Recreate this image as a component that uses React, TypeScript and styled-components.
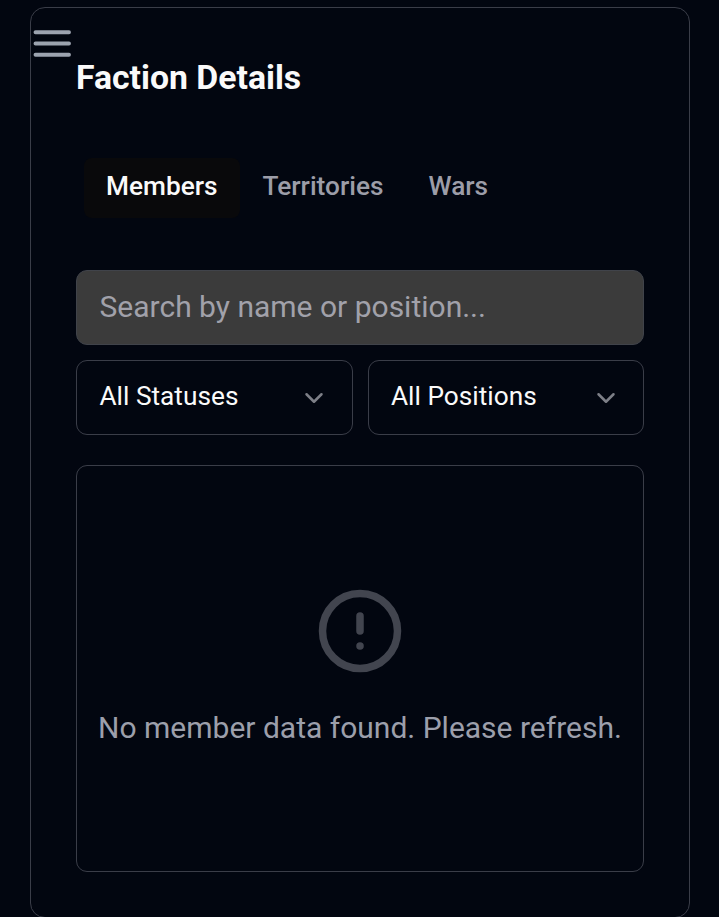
import React from 'react';
import styled, { createGlobalStyle } from 'styled-components';

const GlobalStyle = createGlobalStyle`
  *, *::before, *::after { box-sizing: border-box; }
  body {
    margin: 0;
    background: #020610;
    color: #fafafa;
    font-family: Roboto, sans-serif;
    overflow: hidden;
  }
  button, input { font-family: inherit; }
`;

const Page = styled.main`
  height: 917px;
  padding: 7px 29px 0 30px;
  overflow: hidden;
`;

const Card = styled.section`
  position: relative;
  height: 911px;
  padding: 45px 45px 0;
  border: 1px solid #3a3d48;
  border-radius: 15px;
`;

const MenuButton = styled.button`
  position: absolute;
  top: 20px;
  left: 1px;
  display: flex;
  padding: 0;
  border: 0;
  background: none;
  color: #9ca3af;
`;

const Title = styled.h1`
  margin: 0;
  font-size: 33.75px;
  line-height: 50px;
  font-weight: 700;
  white-space: nowrap;
`;

const TabList = styled.nav`
  display: flex;
  margin-top: 47px;
  padding: 8px 7.5px;
`;

const Tab = styled.button<{ $active?: boolean }>`
  height: 60px;
  padding: 0 22.5px 4px;
  border: 0;
  border-radius: 8px;
  font-size: 26.25px;
  font-weight: 500;
  white-space: nowrap;
  color: ${(p) => (p.$active ? '#fafafa' : '#9c9da8')};
  background: ${(p) => (p.$active ? '#09090b' : 'transparent')};
`;

const SearchInput = styled.input`
  display: block;
  width: 100%;
  height: 75px;
  margin-top: 44px;
  padding: 0 22.5px 2px;
  border: 1px solid #40434a;
  border-radius: 11px;
  background: #3b3b3b;
  color: #fafafa;
  font-size: 30px;
  &::placeholder { color: #a1a1aa; opacity: 1; }
`;

const Filters = styled.div`
  display: grid;
  grid-template-columns: 1fr 1fr;
  gap: 15px;
  margin-top: 15px;
`;

const Select = styled.button`
  display: flex;
  align-items: center;
  justify-content: space-between;
  height: 75px;
  padding: 0 22.5px;
  border: 1px solid #3a3d48;
  border-radius: 11px;
  background: transparent;
  color: #fafafa;
  font-size: 26.25px;
`;

const SelectLabel = styled.span`
  padding-bottom: 4px;
`;

const EmptyPanel = styled.div`
  display: flex;
  flex-direction: column;
  align-items: center;
  height: 407px;
  margin-top: 30px;
  padding-top: 120px;
  border: 1px solid #3a3d48;
  border-radius: 11px;
`;

const EmptyText = styled.p`
  margin: 29px 0 0;
  color: #9c9fab;
  font-size: 30px;
  line-height: 45px;
  white-space: nowrap;
`;

const MenuIcon = () => (
  <svg width="40" height="32" viewBox="0 0 40 32" fill="none" stroke="currentColor" strokeWidth="3.9" strokeLinecap="round">
    <path d="M3.5 4.25H37M3.5 15.5H37M3.5 26.75H37" />
  </svg>
);

const ChevronIcon = () => (
  <svg width="30" height="30" viewBox="0 0 24 24" fill="none" stroke="#7d7f87" strokeWidth="2" strokeLinecap="round" strokeLinejoin="round">
    <path d="m6 9 6 6 6-6" />
  </svg>
);

const AlertIcon = () => (
  <svg width="90" height="90" viewBox="0 0 24 24" fill="none" stroke="#42454f" strokeWidth="2" strokeLinecap="round">
    <circle cx="12" cy="12" r="10" />
    <path d="M12 8v4M12 16h.01" />
  </svg>
);

export default function App() {
  return (
    <>
      <GlobalStyle />
      <Page>
        <Card>
          <MenuButton aria-label="Open menu"><MenuIcon /></MenuButton>
          <Title>Faction Details</Title>
          <TabList>
            <Tab $active>Members</Tab>
            <Tab>Territories</Tab>
            <Tab>Wars</Tab>
          </TabList>
          <SearchInput placeholder="Search by name or position..." />
          <Filters>
            <Select><SelectLabel>All Statuses</SelectLabel><ChevronIcon /></Select>
            <Select><SelectLabel>All Positions</SelectLabel><ChevronIcon /></Select>
          </Filters>
          <EmptyPanel>
            <AlertIcon />
            <EmptyText>No member data found. Please refresh.</EmptyText>
          </EmptyPanel>
        </Card>
      </Page>
    </>
  );
}
